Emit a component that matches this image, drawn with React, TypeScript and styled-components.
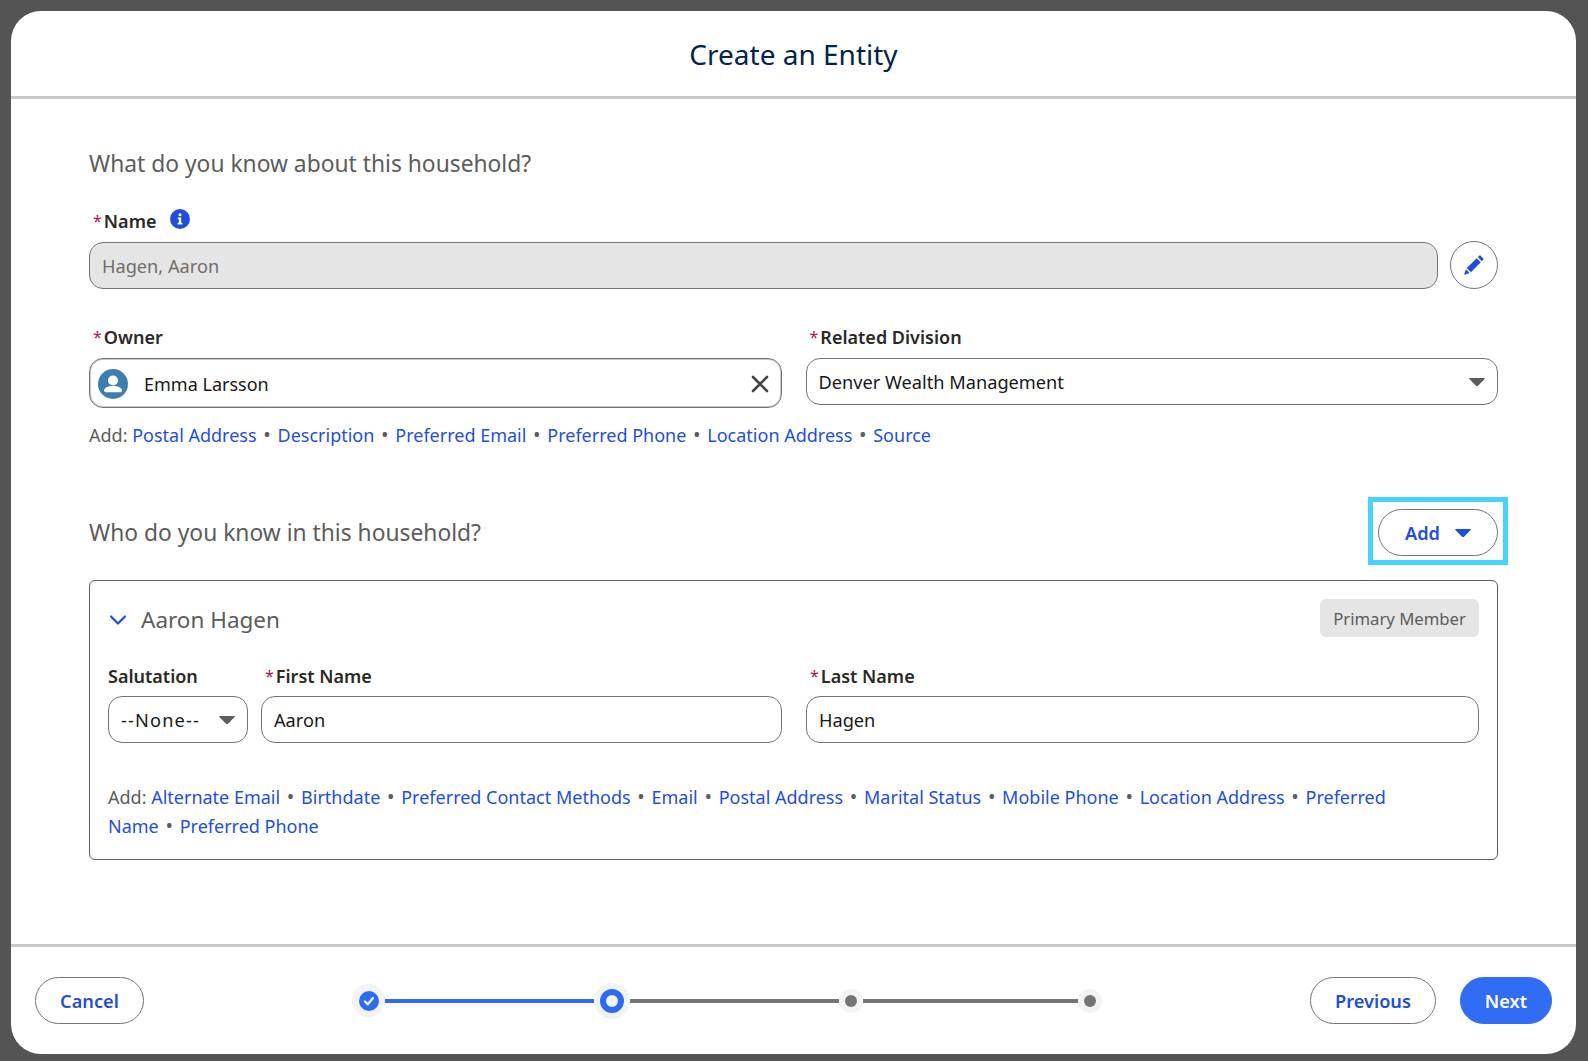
import React from 'react'
import styled, { createGlobalStyle } from 'styled-components'

const GlobalStyle = createGlobalStyle`
    html, body {
        margin: 0;
        padding: 0;
        background: #545454;
    }
    * {
        box-sizing: border-box;
    }
`

const BLUE = '#1f4fd8'

const Page = styled.div`
    height: 1061px;
    padding: 11px 12px 7px 11px;
    background: #545454;
    font-family: 'Noto Sans', 'Open Sans', sans-serif;
    color: #181818;
`

const Modal = styled.div`
    height: 100%;
    display: flex;
    flex-direction: column;
    background: #fff;
    border-radius: 30px;
    overflow: hidden;
`

const Header = styled.header`
    height: 88px;
    flex: none;
    display: flex;
    align-items: center;
    justify-content: center;
    border-bottom: 3px solid #c9c9c9;
`

const Title = styled.h1`
    margin: 0;
    font-size: 28px;
    font-weight: 400;
    color: #03234d;
`

const Content = styled.main`
    flex: 1;
    padding: 50px 78px 0;
`

const SectionTitle = styled.h2`
    margin: 0;
    font-size: 22.8px;
    line-height: 30px;
    font-weight: 400;
    color: #5c5c5c;
`

const NameBlock = styled.div`
    margin-top: 30px;
`

const Label = styled.label`
    display: flex;
    align-items: center;
    height: 24px;
    margin-bottom: 8px;
    font-size: 18px;
    font-weight: 600;
    color: #2b2826;
`

const Star = styled.span`
    margin: 0 2px 0 4px;
    color: #b0135a;
    font-size: 16px;
    font-weight: 400;
`

const InfoIcon = styled.svg`
    width: 20px;
    height: 20px;
    margin: -5px 0 0 14px;
`

const NameRow = styled.div`
    display: flex;
    align-items: center;
    gap: 12px;
`

const Field = styled.div<{ $disabled?: boolean; $tall?: boolean }>`
    flex: 1;
    min-width: 0;
    height: ${p => (p.$tall ? '50px' : '47px')};
    display: flex;
    align-items: center;
    justify-content: space-between;
    padding: ${p => (p.$disabled ? '2px' : '0')} 12px 0;
    border: 1px solid #747474;
    border-radius: 14px;
    background: ${p => (p.$disabled ? '#e5e5e5' : '#fff')};
    color: ${p => (p.$disabled ? '#706e6b' : '#181818')};
    font-size: 18.2px;
`

const OwnerField = styled(Field)`
    padding: 2px 11px 0 8px;
    box-shadow: inset 0 0 0 1px #c9c9c9;
`

const OwnerName = styled.span`
    flex: 1;
    margin-left: 16px;
    font-size: 18px;
`

const NoneText = styled.span`
    letter-spacing: 1.15px;
`

const IconButton = styled.button`
    width: 48px;
    height: 48px;
    flex: none;
    display: flex;
    align-items: center;
    justify-content: center;
    padding: 0;
    border: 1px solid #747474;
    border-radius: 50%;
    background: #fff;
`

const TwoColumns = styled.div`
    display: grid;
    grid-template-columns: 1fr 1fr;
    column-gap: 24px;
    margin-top: 36px;

    ${Label} {
        margin-bottom: 9px;
    }
`

const AddLine = styled.p<{ $top: number; $right?: number }>`
    margin: ${p => p.$top}px ${p => p.$right || 0}px 0 0;
    font-size: 18px;
    line-height: 29px;
    color: #5c5c5c;
`

const AddLink = styled.a`
    color: ${BLUE};
    text-decoration: none;
`

const Dot = styled.span`
    margin: 0 1.5px;
    font-size: 20px;
    line-height: 1;
`

const MembersHead = styled.div`
    display: flex;
    align-items: center;
    justify-content: space-between;
    margin-top: 59px;
`

const AddWrap = styled.div`
    position: relative;
`

const Highlight = styled.div`
    position: absolute;
    top: -12px;
    right: -10px;
    bottom: -9px;
    left: -10px;
    border: 5px solid #45d4ff;
    pointer-events: none;
`

const PillButton = styled.button<{ $primary?: boolean; $width: number }>`
    width: ${p => p.$width}px;
    height: 47px;
    display: flex;
    align-items: center;
    justify-content: center;
    gap: 15px;
    padding: 0;
    border: 1px solid ${p => (p.$primary ? '#316cf4' : '#747474')};
    border-radius: 24px;
    background: ${p => (p.$primary ? '#316cf4' : '#fff')};
    color: ${p => (p.$primary ? '#fff' : BLUE)};
    font-family: inherit;
    font-size: 18.2px;
    font-weight: 600;
`

const MemberCard = styled.section`
    margin-top: 24px;
    padding: 18px 18px 18px;
    border: 1px solid #5c5c5c;
    border-radius: 6px;
`

const CardHead = styled.div`
    display: flex;
    align-items: center;
    justify-content: space-between;
    height: 38px;
`

const MemberName = styled.div`
    display: flex;
    align-items: center;
    gap: 14px;
    padding: 3px 0 0 1px;
    font-size: 22.5px;
    color: #5c5c5c;
`

const Badge = styled.span`
    width: 159px;
    height: 38px;
    display: flex;
    align-items: center;
    justify-content: center;
    border-radius: 6px;
    background: #e5e5e5;
    color: #5c5c5c;
    font-size: 16.7px;
`

const MemberFields = styled.div`
    display: grid;
    grid-template-columns: 674px 673px;
    column-gap: 24px;
    margin-top: 27px;
`

const NameFields = styled.div`
    display: grid;
    grid-template-columns: 140px 1fr;
    column-gap: 13px;
`

const Footer = styled.footer`
    height: 110px;
    flex: none;
    display: flex;
    align-items: center;
    justify-content: space-between;
    padding: 0 24px;
    border-top: 3px solid #c9c9c9;
`

const Steps = styled.div`
    display: flex;
    align-items: center;
`

const Step = styled.div<{ $size: number }>`
    width: ${p => p.$size}px;
    height: ${p => p.$size}px;
    flex: none;
    display: flex;
    align-items: center;
    justify-content: center;
    border-radius: 50%;
    background: #f3f3f3;
`

const StepDone = styled.div`
    width: 20px;
    height: 20px;
    display: flex;
    align-items: center;
    justify-content: center;
    border-radius: 50%;
    background: #2e6bf5;
`

const StepActive = styled.div`
    width: 24px;
    height: 24px;
    border: 6px solid #2e6bf5;
    border-radius: 50%;
    background: #f3f3f3;
`

const StepTodo = styled.div`
    width: 12px;
    height: 12px;
    border-radius: 50%;
    background: #747474;
`

const StepLine = styled.div<{ $done?: boolean; $width: number }>`
    width: ${p => p.$width}px;
    height: 4px;
    background: ${p => (p.$done ? '#2e6bf5' : '#747474')};
`

const RightButtons = styled.div`
    display: flex;
    gap: 24px;
`

const Caret = ({ color, size = 16 }: { color: string; size?: number }) => (
    <svg width={size} height={size * 0.62} viewBox="0 0 18 11">
        <path d="M1 1h16a.8.8 0 0 1 .6 1.3l-8 8a.8.8 0 0 1-1.2 0l-8-8A.8.8 0 0 1 1 1z" fill={color} />
    </svg>
)

// an item given as words breaks over two lines without one link spanning both
function Links({ items }: { items: (string | string[])[] }) {
    return (
        <>
            {items.map((item, i) => (
                <React.Fragment key={i}>
                    {typeof item === 'string' ? (
                        <AddLink href="#">{item}</AddLink>
                    ) : (
                        item.map((word, j) => (
                            <React.Fragment key={word}>
                                {j > 0 ? ' ' : null}
                                <AddLink href="#">{word}</AddLink>
                            </React.Fragment>
                        ))
                    )}
                    {i < items.length - 1 ? <Dot> • </Dot> : null}
                </React.Fragment>
            ))}
        </>
    )
}

export default function App() {
    return (
        <Page>
            <GlobalStyle />
            <Modal>
                <Header>
                    <Title>Create an Entity</Title>
                </Header>
                <Content>
                    <SectionTitle>What do you know about this household?</SectionTitle>
                    <NameBlock>
                        <Label>
                            <Star>*</Star>Name
                            <InfoIcon viewBox="0 0 20 20">
                                <circle cx="10" cy="10" r="10" fill={BLUE} />
                                <circle cx="10" cy="5.8" r="1.5" fill="#fff" />
                                <path d="M7.8 8.6h3.4v5.2h1.2v1.6H7.6v-1.6h1.3v-3.6H7.8z" fill="#fff" />
                            </InfoIcon>
                        </Label>
                        <NameRow>
                            <Field $disabled>Hagen, Aaron</Field>
                            <IconButton aria-label="Edit">
                                <svg width="20" height="20" viewBox="0 0 20 20">
                                    <path d="M15.2 0.7a1 1 0 0 1 1.4 0l2.7 2.7a1 1 0 0 1 0 1.4l-1.4 1.4-4.1-4.1z" fill={BLUE} />
                                    <path d="M12.7 3.2l4.1 4.1-9.9 9.9-4.1-4.1z" fill={BLUE} />
                                    <path d="M1.9 14.3l3.8 3.8-5 1.6a.4.4 0 0 1-.5-.5z" fill={BLUE} />
                                </svg>
                            </IconButton>
                        </NameRow>
                    </NameBlock>
                    <TwoColumns>
                        <div>
                            <Label>
                                <Star>*</Star>Owner
                            </Label>
                            <OwnerField $tall>
                                <svg width="30" height="30" viewBox="0 0 30 30">
                                    <circle cx="15" cy="15" r="15" fill="#3c7fae" />
                                    <circle cx="15" cy="11.5" r="5" fill="#fff" />
                                    <path d="M6 21.5c0-2.6 3.8-4.5 9-4.5s9 1.9 9 4.5c0 1-.9 1.8-2 1.8H8c-1.1 0-2-.8-2-1.8z" fill="#fff" />
                                </svg>
                                <OwnerName>Emma Larsson</OwnerName>
                                <svg width="20" height="20" viewBox="0 0 20 20">
                                    <path d="M3 3l14 14M17 3L3 17" stroke="#444" strokeWidth="2.6" strokeLinecap="round" />
                                </svg>
                            </OwnerField>
                        </div>
                        <div>
                            <Label>
                                <Star>*</Star>Related Division
                            </Label>
                            <Field>
                                Denver Wealth Management
                                <Caret color="#5c5c5c" />
                            </Field>
                        </div>
                    </TwoColumns>
                    <AddLine $top={13}>
                        Add:{' '}
                        <Links
                            items={[
                                'Postal Address',
                                'Description',
                                'Preferred Email',
                                'Preferred Phone',
                                'Location Address',
                                'Source',
                            ]}
                        />
                    </AddLine>
                    <MembersHead>
                        <SectionTitle>Who do you know in this household?</SectionTitle>
                        <AddWrap>
                            <PillButton $width={120}>
                                Add
                                <Caret color={BLUE} />
                            </PillButton>
                            <Highlight />
                        </AddWrap>
                    </MembersHead>
                    <MemberCard>
                        <CardHead>
                            <MemberName>
                                <svg width="18" height="12" viewBox="0 0 18 12">
                                    <path d="M2 2.5l7 7 7-7" fill="none" stroke={BLUE} strokeWidth="2.2" strokeLinecap="round" strokeLinejoin="round" />
                                </svg>
                                Aaron Hagen
                            </MemberName>
                            <Badge>Primary Member</Badge>
                        </CardHead>
                        <MemberFields>
                            <NameFields>
                                <div>
                                    <Label>Salutation</Label>
                                    <Field>
                                        <NoneText>--None--</NoneText>
                                        <Caret color="#5c5c5c" />
                                    </Field>
                                </div>
                                <div>
                                    <Label>
                                        <Star>*</Star>First Name
                                    </Label>
                                    <Field>Aaron</Field>
                                </div>
                            </NameFields>
                            <div>
                                <Label>
                                    <Star>*</Star>Last Name
                                </Label>
                                <Field>Hagen</Field>
                            </div>
                        </MemberFields>
                        <AddLine $top={40} $right={60}>
                            Add:{' '}
                            <Links
                                items={[
                                    'Alternate Email',
                                    'Birthdate',
                                    'Preferred Contact Methods',
                                    'Email',
                                    'Postal Address',
                                    'Marital Status',
                                    'Mobile Phone',
                                    'Location Address',
                                    ['Preferred', 'Name'],
                                    'Preferred Phone',
                                ]}
                            />
                        </AddLine>
                    </MemberCard>
                </Content>
                <Footer>
                    <PillButton $width={109}>Cancel</PillButton>
                    <Steps>
                        <Step $size={33}>
                            <StepDone>
                                <svg width="12" height="12" viewBox="0 0 12 12">
                                    <path d="M2 6.5l2.8 2.8L10 3" fill="none" stroke="#fff" strokeWidth="2.2" strokeLinecap="round" strokeLinejoin="round" />
                                </svg>
                            </StepDone>
                        </Step>
                        <StepLine $done $width={209} />
                        <Step $size={36}>
                            <StepActive />
                        </Step>
                        <StepLine $width={209} />
                        <Step $size={24}>
                            <StepTodo />
                        </Step>
                        <StepLine $width={215} />
                        <Step $size={24}>
                            <StepTodo />
                        </Step>
                    </Steps>
                    <RightButtons>
                        <PillButton $width={126}>Previous</PillButton>
                        <PillButton $primary $width={92}>Next</PillButton>
                    </RightButtons>
                </Footer>
            </Modal>
        </Page>
    )
}
